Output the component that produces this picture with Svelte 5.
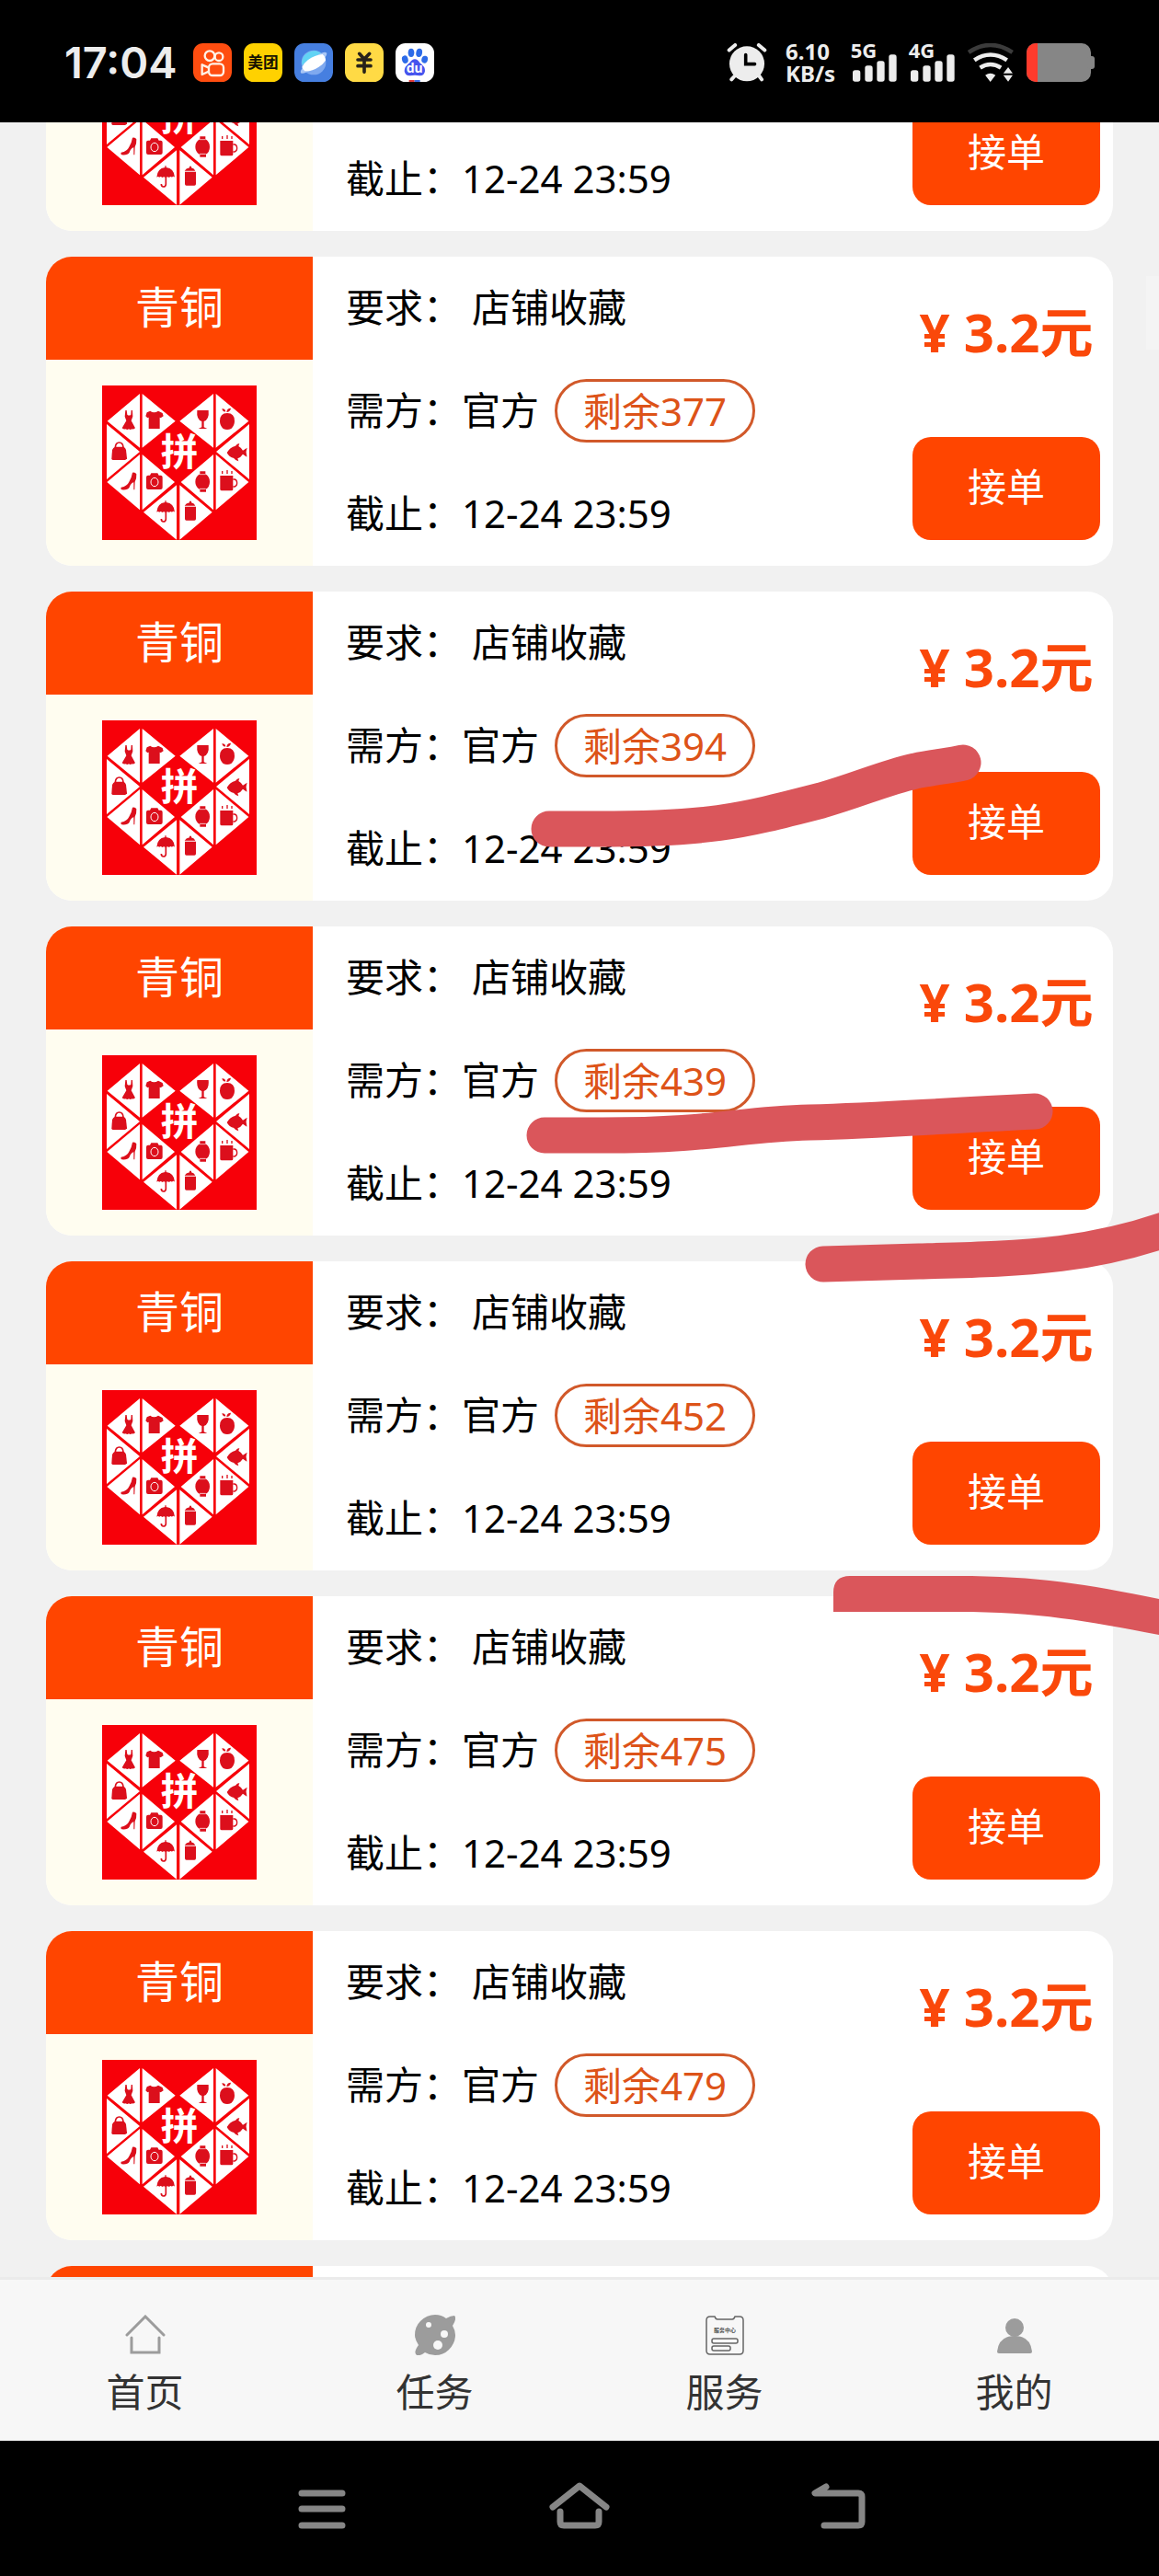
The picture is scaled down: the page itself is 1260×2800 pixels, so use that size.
<script lang="ts">
  import { onMount } from 'svelte';

  interface Task {
    id: number;
    level: string;
    requirement: string;
    owner: string;
    remaining: number;
    deadline: string;
    price: string;
  }

  const tasks: Task[] = [365, 377, 394, 439, 452, 475, 479, 483].map((remaining, id) => ({
    id,
    level: '青铜',
    requirement: '店铺收藏',
    owner: '官方',
    remaining,
    deadline: '12-24 23:59',
    price: '3.2'
  }));

  const tabs = [
    { icon: 'home', label: '首页' },
    { icon: 'task', label: '任务' },
    { icon: 'service', label: '服务' },
    { icon: 'mine', label: '我的' }
  ];

  const savedScroll = 218;

  let list: HTMLElement;

  onMount(() => {
    list.scrollTop = savedScroll;
  });
</script>

{#snippet signal(label: string)}
  <svg class="signal" viewBox="471 83 150 126" aria-label={label}>
    <text x="470" y="131" font-size="66" font-weight="700">{label}</text>
    <rect x="477" y="171" width="25" height="37" rx="8" />
    <rect x="517" y="156" width="25" height="52" rx="8" />
    <rect x="556" y="141" width="25" height="67" rx="8" />
    <rect x="595" y="120" width="25" height="88" rx="8" />
  </svg>
{/snippet}

{#snippet shopLogo()}
  <svg class="logo" viewBox="33 27 504 504" role="img" aria-label="拼">
    <rect x="33" y="27" width="504" height="504" fill="#f70009" />
    <path
      fill="#fff"
      d="M156 54V230L50 143ZM164 54V230L272 143ZM396 54V230L286 143ZM404 54V230L511 143ZM48 153V333L156 243ZM513 153V333L405 243ZM156 252V433L49 342ZM164 252V433L270 342ZM396 252V433L290 342ZM404 252V433L511 342ZM276 352V530L168 440ZM286 352V530L392 440Z"
    />
    <text
      x="285"
      y="289"
      text-anchor="middle"
      font-size="122"
      font-weight="700"
      fill="#fff">拼</text
    >
    <g fill="#dc0f1c">
      <!-- dress, shirt -->
      <path d="M109 108h4l2 14q6 5 12 0l1-14h4l1 20-5 14 13 24q-6 5-11 3-5 4-10 0-5 4-10 0-6 2-12-3l14-24-5-14Z" />
      <path d="M190 110q12 10 26 0l14 7 3 10-9 6-3-2v37h-36v-37l-4 2-6-6 4-12Z" />
      <!-- glass, apple -->
      <path d="M343 108h37q3 30-15 36v19l11 5h-29l11-5v-19q-18-6-15-36Z" />
      <path d="M441 117q24 0 24 26 0 14-11 25-13 6-26 0-11-11-11-25 0-26 24-26ZM424 103q10-1 12 9-10 2-12-9ZM439 114q1-13 14-13-2 12-14 13Z" />
      <!-- bag, fish -->
      <path d="M66 237q3-8 9-10h28q6 2 8 10l3 28q-2 5-7 5H68q-4 0-4-5Z" />
      <path d="M76 229q1-16 13-16t13 16" fill="none" stroke="#dc0f1c" stroke-width="5" />
      <path d="M440 246q10-18 28-22 5-7 13-8l-3 9q9 5 14 14l14-9q-4 14-3 16 2 9 2 14l-13-9q-8 12-17 14l3 9q-10-1-15-10-16-3-23-18Z" />
      <!-- heel, camera -->
      <path d="M132 311q9-2 13 5 1 16-5 25l-1 26h-3v-24q-9 2-14 16-6 10-25 8-5-3-2-8 20-4 26-18 8-12 11-30Z" />
      <path d="M177 326q0-6 6-6h6l4-7h21l4 7h6q6 0 6 6v34q0 6-6 6h-41q-6 0-6-6Z" />
      <ellipse cx="204" cy="342" rx="12" ry="14" fill="none" stroke="#fff" stroke-width="3" />
      <!-- watch, cup -->
      <path d="M352 307h18v9q14 8 14 25t-13 24h-21q-13-9-13-24 0-17 15-25ZM352 366h20v8h-20Z" />
      <path d="M351 317h20M351 364h20" stroke="#fff" stroke-width="2" />
      <path d="M418 321h42v44q0 5-5 5h-32q-5 0-5-5Z" />
      <path d="M460 333h5q8 2 8 12t-8 12h-5" fill="none" stroke="#dc0f1c" stroke-width="4" />
      <path d="M425 306v9M441 303v12M456 306v9" stroke="#dc0f1c" stroke-width="4" />
      <!-- umbrella, bottle -->
      <path d="M238 403h4v5q26 3 28 32-5-5-9 0-5-4-9 1-6-4-12 0-5-4-11 0-5-5-9-1-5-4-9 0 2-29 27-32Z" />
      <path d="M241 438v25q-1 8-8 8t-7-9" fill="none" stroke="#dc0f1c" stroke-width="5" />
      <path d="M318 404h6v5q10 3 13 10h-35q4-8 16-10ZM303 422h36v40q0 5-5 5h-26q-5 0-5-5Z" />
    </g>
  </svg>
{/snippet}

<div class="screen">
  <header class="status-bar">
    <div class="status-left">
      <time>17:04</time>
      <svg class="app" viewBox="0 0 126 126" aria-hidden="true">
        <rect width="126" height="126" rx="32" fill="#ff4d10" />
        <g fill="none" stroke="#fff2e8" stroke-width="7">
          <circle cx="54" cy="41" r="16" />
          <circle cx="84" cy="44" r="13" />
          <rect x="51" y="67" width="48" height="38" rx="12" />
          <path d="M51 80 29 70v32l22-10" stroke-linejoin="round" />
        </g>
      </svg>
      <svg class="app" viewBox="0 0 126 126" aria-hidden="true">
        <rect width="126" height="126" rx="32" fill="#ffd100" />
        <text x="63" y="80" text-anchor="middle" font-size="50" font-weight="700" fill="#161200">美团</text>
      </svg>
      <svg class="app" viewBox="0 0 126 126" aria-hidden="true">
        <rect width="126" height="126" rx="32" fill="#467fe0" />
        <circle cx="63" cy="63" r="40" fill="#7fa9ef" />
        <path d="M25 73A40 40 0 0 1 92 36Q55 42 25 73Z" fill="#62d3f4" />
        <ellipse cx="63" cy="64" rx="53" ry="14" fill="#a9c6f5" transform="rotate(-38 63 64)" />
        <path d="M25 78Q30 66 44 55 66 38 92 36q10 8 10 20Q94 68 80 77 58 92 34 91q-7-5-9-13Z" fill="#fff" />
      </svg>
      <svg class="app" viewBox="0 0 126 126" aria-hidden="true">
        <rect width="126" height="126" rx="32" fill="#ffda45" />
        <path
          d="M47 34l16 18 17-18M42 54h42M42 74h42M63 53v41"
          fill="none"
          stroke="#27221a"
          stroke-width="11"
          stroke-linecap="round"
        />
      </svg>
      <svg class="app" viewBox="0 0 126 126" aria-hidden="true">
        <rect width="126" height="126" rx="32" fill="#fff" />
        <g fill="#2d6be8">
          <ellipse cx="31" cy="53" rx="10" ry="13" transform="rotate(-15 31 53)" />
          <ellipse cx="51" cy="31" rx="10" ry="14" />
          <ellipse cx="77" cy="31" rx="10" ry="14" transform="rotate(10 77 31)" />
          <ellipse cx="95" cy="53" rx="10" ry="12" transform="rotate(15 95 53)" />
        </g>
        <path d="M63 52q9 0 16 12 18 12 17 27-2 16-18 15-15-3-30 0-17 1-19-15 0-15 17-27 8-12 17-12Z" fill="#4654ee" />
        <text x="62" y="97" text-anchor="middle" font-size="42" font-weight="700" fill="#fff">du</text>
        <rect x="44" y="120" width="18" height="6" fill="#e23b3b" />
        <rect x="62" y="120" width="18" height="6" fill="#3f6fe8" />
      </svg>
    </div>
    <div class="status-right">
      <svg class="alarm" viewBox="69 81 132 128" aria-hidden="true">
        <g fill="none" stroke="#ededed" stroke-linecap="round" stroke-width="12">
          <path d="M76 104l20-17M194 104l-20-17" />
          <path d="M94 190l-10 11M176 190l8 11" />
        </g>
        <circle cx="135" cy="149" r="58" fill="#ededed" />
        <path d="M131 119v31h30" fill="none" stroke="#000" stroke-width="11" stroke-linecap="round" />
      </svg>
      <div class="speed"><span>6.10</span><span>KB/s</span></div>
      {@render signal('5G')}
      {@render signal('4G')}
      <svg class="wifi" viewBox="848 80 156 128" aria-hidden="true">
        <g fill="none" stroke-width="14">
          <path d="M853 110q72-48 145 0" stroke="#3b3b3b" />
          <path d="M872 136q53-36 108 0" stroke="#ededed" />
          <path d="M891 161q34-22 69 0" stroke="#ededed" />
        </g>
        <path d="M908 186q17-12 34 0l-17 22ZM968 180l16-21 15 21ZM968 186h31l-15 21Z" fill="#ededed" />
      </svg>
      <svg class="battery" viewBox="0 0 74 42" aria-hidden="true">
        <rect width="70" height="42" rx="10" fill="#868686" />
        <rect x="66" y="14" width="8" height="14" rx="3" fill="#868686" />
        <path d="M10 0h2v42h-2A10 10 0 0 1 0 32V10A10 10 0 0 1 10 0Z" fill="#ff3b2c" />
      </svg>
    </div>
  </header>

  <main bind:this={list}>
    <ul class="tasks">
      {#each tasks as task (task.id)}
        <li class="card">
          <div class="shop">
            <div class="level">{task.level}</div>
            {@render shopLogo()}
          </div>
          <div class="details">
            <p>要求：&nbsp;{task.requirement}</p>
            <p>需方：{task.owner}<span class="remaining">剩余{task.remaining}</span></p>
            <p>截止：{task.deadline}</p>
          </div>
          <div class="action">
            <strong>¥ {task.price}元</strong>
            <button type="button">接单</button>
          </div>
        </li>
      {/each}
    </ul>
  </main>

  <nav class="tabs">
    {#each tabs as tab (tab.icon)}
      <a href="#{tab.icon}">
        <svg viewBox="0 0 44 44" aria-hidden="true">
          {#if tab.icon === 'home'}
            <path
              d="M2 22 22 2l20 20M7 25v16h30V25"
              fill="none"
              stroke="#9c9c9c"
              stroke-width="3"
              stroke-linecap="round"
            />
          {:else if tab.icon === 'task'}
            <path
              d="M22 0q7 0 12 4 5-3 9-3 3 3-2 11 3 5 3 10 0 9-7 16-6 6-15 6-6 0-11-3-5 4-9 3-4-3 2-11-4-6-4-11 0-9 6-15 7-7 16-7Z"
              fill="#9c9c9c"
            />
            <g fill="#f7f7f7">
              <circle cx="15" cy="11" r="3" />
              <circle cx="32" cy="21" r="4" />
              <circle cx="25" cy="33" r="5" />
            </g>
          {:else if tab.icon === 'service'}
            <g fill="none" stroke="#666" stroke-width="1.5">
              <path d="M6 2h5q1 3 3 3h16q2 0 3-3h5q4 0 4 4v33q0 4-4 4H6q-4 0-4-4V6q0-4 4-4Z" />
              <rect x="8" y="26" width="28" height="5" rx="2" />
              <rect x="8" y="34" width="20" height="5" rx="2" />
            </g>
            <text x="22" y="19" text-anchor="middle" font-size="6" font-weight="700" fill="#555">服务中心</text>
          {:else}
            <ellipse cx="22" cy="14" rx="10" ry="10" fill="#9c9c9c" />
            <path d="M3 40Q5 23 22 23t19 17q0 2-2 2H5q-2 0-2-2Z" fill="#9c9c9c" />
          {/if}
        </svg>
        <span>{tab.label}</span>
      </a>
    {/each}
  </nav>

  <footer class="system-nav">
    <button type="button" aria-label="菜单">
      <svg viewBox="0 0 72 56" aria-hidden="true">
        <path d="M14 14h44M14 31h44M14 49h44" />
      </svg>
    </button>
    <button type="button" aria-label="主页">
      <svg viewBox="0 0 72 56" aria-hidden="true">
        <path d="M7 29 36 6l29 23M15 34v11q0 4 4 4h34q4 0 4-4V34" />
      </svg>
    </button>
    <button type="button" aria-label="返回">
      <svg viewBox="0 0 72 56" aria-hidden="true">
        <path d="M24 7 12 14h47q4 0 4 4v27q0 4-4 4H22" />
      </svg>
    </button>
  </footer>

  <div class="edge-handle"></div>

  <!-- marker strokes drawn over the list -->
  <svg class="marks" viewBox="0 0 1260 2800" aria-hidden="true">
    <g fill="none" stroke="#da565b" stroke-width="39" stroke-linecap="round">
      <path d="M597 901H650C770 901 800 894 893 870C935 858 960 846 995 838C1015 834 1035 832 1047 829" />
      <path d="M592 1234H655C780 1234 800 1222 880 1220S1000 1214 1125 1208" />
      <path d="M895 1374L999 1371C1110 1368 1190 1367 1290 1328" />
    </g>
    <path
      d="M906 1752V1731Q906 1713 924 1713H1040C1130 1713 1180 1722 1260 1738V1777C1180 1762 1130 1752 1040 1752Z"
      fill="#da565b"
    />
  </svg>
</div>

<style>
  :global(body) {
    background: #f1f1f1;
  }

  .screen {
    position: relative;
    display: flex;
    flex-direction: column;
    height: 100vh;
    overflow: hidden;
    font-family: 'Noto Sans', 'Noto Sans CJK SC', sans-serif;
    font-size: 42px;
    color: #000;
  }

  .status-bar {
    flex: none;
    display: flex;
    align-items: center;
    justify-content: space-between;
    height: 133px;
    padding: 3px 70px 0;
    box-sizing: border-box;
    background: #000;
    color: #ededed;
  }

  .status-left,
  .status-right {
    display: flex;
    align-items: center;
    gap: 13px;
  }

  time {
    margin-right: 4px;
    font-family: Inter, sans-serif;
    font-size: 47px;
    font-weight: 600;
    line-height: 56px;
  }

  .app {
    width: 42px;
    height: 42px;
  }

  .alarm {
    width: 44px;
    height: 42px;
  }

  .speed {
    display: grid;
    margin: 0 4px 0 7px;
    font-size: 24px;
    font-weight: 700;
    line-height: 24px;
  }

  .signal {
    width: 50px;
    height: 42px;
    overflow: visible;
    fill: #ededed;
  }

  .wifi {
    width: 52px;
    height: 42px;
  }

  .battery {
    width: 74px;
    height: 42px;
  }

  main {
    flex: 1;
    min-height: 0;
    overflow-y: auto;
    scrollbar-width: none;
    background: #f1f1f1;
  }

  .tasks {
    display: grid;
    gap: 28px;
    margin: 0;
    padding: 0 50px;
    list-style: none;
  }

  .card {
    display: flex;
    border-radius: 28px;
    overflow: hidden;
    background: #fff;
  }

  .shop {
    flex: 0 0 25%;
    display: flex;
    flex-direction: column;
    align-items: center;
    background: #fffdf0;
  }

  .level {
    align-self: stretch;
    padding-bottom: 2px;
    background: #ff4500;
    color: #fff;
    font-size: 48px;
    line-height: 110px;
    text-align: center;
  }

  .logo {
    width: 168px;
    height: 168px;
    margin: 28px 0;
  }

  .details {
    flex: 1;
    padding-left: 36px;
  }

  .details p {
    display: flex;
    align-items: center;
    height: 112px;
    margin: 0;
    padding-bottom: 2px;
    box-sizing: border-box;
    line-height: 60px;
    white-space: nowrap;
  }

  .remaining {
    margin-left: 17px;
    padding: 0 28px;
    border: 3px solid #d1592a;
    border-radius: 36px;
    color: #dd5318;
    line-height: 63px;
  }

  .action {
    display: flex;
    flex-direction: column;
    align-items: center;
    justify-content: space-between;
    padding: 28px 14px;
  }

  .action strong {
    color: #fa480a;
    font-size: 58px;
    line-height: 108px;
    white-space: nowrap;
  }

  .action button {
    width: 204px;
    height: 112px;
    padding: 0 0 4px;
    border: none;
    border-radius: 20px;
    background: #ff4500;
    color: #fff;
    font: inherit;
    line-height: 60px;
    cursor: pointer;
  }

  .tabs {
    flex: none;
    display: grid;
    grid-template-columns: repeat(4, 1fr);
    height: 178px;
    box-sizing: border-box;
    border-top: 3px solid #ebebeb;
    background: #f7f7f7;
  }

  .tabs a {
    display: flex;
    flex-direction: column;
    align-items: center;
    gap: 12px;
    padding-top: 38px;
    color: #333;
    line-height: 56px;
    text-decoration: none;
  }

  .tabs svg {
    width: 44px;
    height: 44px;
  }

  .system-nav {
    flex: none;
    display: flex;
    justify-content: center;
    align-items: center;
    gap: 208px;
    height: 147px;
    padding-bottom: 5px;
    box-sizing: border-box;
    background: #000;
  }

  .system-nav button {
    display: flex;
    padding: 0;
    border: none;
    background: none;
  }

  .system-nav svg {
    width: 72px;
    height: 56px;
    fill: none;
    stroke: #868686;
    stroke-width: 7;
    stroke-linecap: round;
    stroke-linejoin: round;
  }

  .edge-handle {
    position: absolute;
    top: 300px;
    right: 0;
    width: 14px;
    height: 80px;
    background: #f4f4f4;
  }

  .marks {
    position: absolute;
    top: 0;
    left: 0;
    width: 100%;
    pointer-events: none;
  }
</style>
